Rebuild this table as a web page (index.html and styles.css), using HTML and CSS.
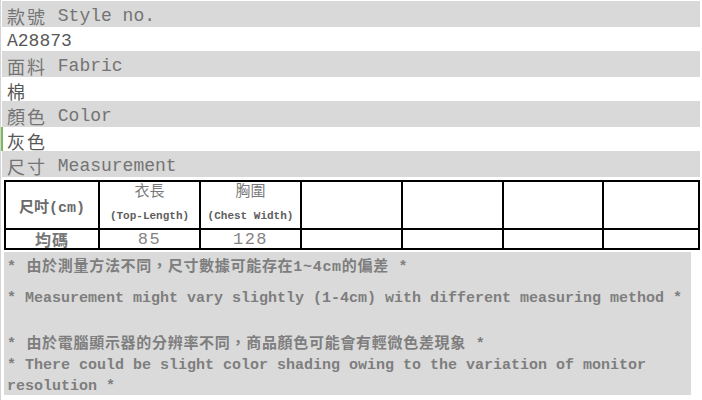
FILE: index.html
```html
<!DOCTYPE html>
<html lang="zh-Hant">
<head>
    <meta charset="UTF-8">
    <title>款號 A28873</title>
    <link rel="stylesheet" href="styles.css">
</head>
<body>
    <div class="sheet">
        <!-- 商品資料 -->
        <div class="row label"><span class="zh">款號</span> Style no.</div>
        <div class="row value">A28873</div>
        <div class="row label"><span class="zh">面料</span> Fabric</div>
        <div class="row value"><span class="zh">棉</span></div>
        <div class="row label"><span class="zh">顏色</span> Color</div>
        <div class="row value selected"><span class="zh">灰色</span></div>
        <div class="row label"><span class="zh">尺寸</span> Measurement</div>

        <!-- 尺寸表 -->
        <div class="size-table">
            <div class="cell head first">尺吋(cm)</div>
            <div class="cell head">
                <span class="zh-title">衣長</span>
                <span class="en-sub">(Top-Length)</span>
            </div>
            <div class="cell head">
                <span class="zh-title">胸圍</span>
                <span class="en-sub">(Chest Width)</span>
            </div>
            <div class="cell head"></div>
            <div class="cell head"></div>
            <div class="cell head"></div>
            <div class="cell head"></div>

            <div class="cell data first">均碼</div>
            <div class="cell data num">85</div>
            <div class="cell data num">128</div>
            <div class="cell data"></div>
            <div class="cell data"></div>
            <div class="cell data"></div>
            <div class="cell data"></div>
        </div>

        <!-- 備註 -->
        <div class="notes">
            <p class="note zh-note">* 由於測量方法不同，尺寸數據可能存在1~4cm的偏差 *</p>
            <p class="note n2">* Measurement might vary slightly (1-4cm) with different measuring method *</p>
            <p class="note zh-note n3">* 由於電腦顯示器的分辨率不同，商品顏色可能會有輕微色差現象 *</p>
            <p class="note">* There could be slight color shading owing to the variation of monitor resolution *</p>
        </div>
    </div>
</body>
</html>
```

FILE: styles.css
```css
body {
    margin: 0;
    background: #fff;
    font-family: "Liberation Mono", "Noto Sans CJK TC", monospace;
    border-left: 1px solid #d4d4d4;
    height: 400px;
    box-sizing: border-box;
    overflow: hidden;
}

.sheet {
    padding-top: 1px;
    padding-left: 1px;
    width: 698px;
}

/* 資料列 */
.row {
    font-size: 18px;
    padding: 3px 0 0 5px;
    box-sizing: border-box;
    display: flex;
    align-items: center;
    white-space: pre;
}

.row.label {
    height: 26px;
    background: #d9d9d9;
    color: #747474;
}

.row.value {
    height: 24px;
    color: #575757;
}

.row.selected {
    box-shadow: inset 2px 0 0 #7cb95a;
    margin-left: -1px;
    padding-left: 6px;
}

.zh {
    letter-spacing: 2px;
}

/* 尺寸表 */
.size-table {
    margin: 3px 0 0 2px;
    width: 696px;
    display: grid;
    grid-template-columns: 92px 99px 99px 99px 99px 98px 94px;
    grid-template-rows: 46px 18px;
    gap: 2px;
    padding: 2px;
    box-sizing: border-box;
    background: #000;
}

.cell {
    background: #fff;
    display: flex;
    flex-direction: column;
    align-items: center;
    justify-content: center;
    color: #666;
}

.cell.head {
    justify-content: flex-start;
}

.cell.head.first {
    justify-content: center;
    font-size: 15px;
    font-weight: bold;
    color: #6a6a6a;
    padding-top: 2px;
}

.zh-title {
    font-size: 15px;
    line-height: 18px;
    margin-top: 2px;
    color: #7a7a7a;
}

.en-sub {
    font-size: 11px;
    font-weight: bold;
    line-height: 14px;
    margin-top: 7px;
    color: #5e5e5e;
}

.cell.data.first {
    font-size: 16px;
    font-weight: bold;
    color: #777;
    letter-spacing: 1px;
}

.cell.num {
    font-size: 17px;
    letter-spacing: 1.5px;
    color: #858585;
}

/* 備註 */
.notes {
    margin: 2px 0 0 2px;
    width: 687px;
    height: 143px;
    background: #dadada;
    padding: 5px 0 0 3px;
    box-sizing: border-box;
}

.note {
    margin: 0;
    font-size: 15px;
    font-weight: bold;
    line-height: 21px;
    color: #7e7e7e;
}

.zh-note {
    letter-spacing: 0.7px;
}

.n2 {
    margin-top: 10px;
}

.n3 {
    margin-top: 25px;
}
```
